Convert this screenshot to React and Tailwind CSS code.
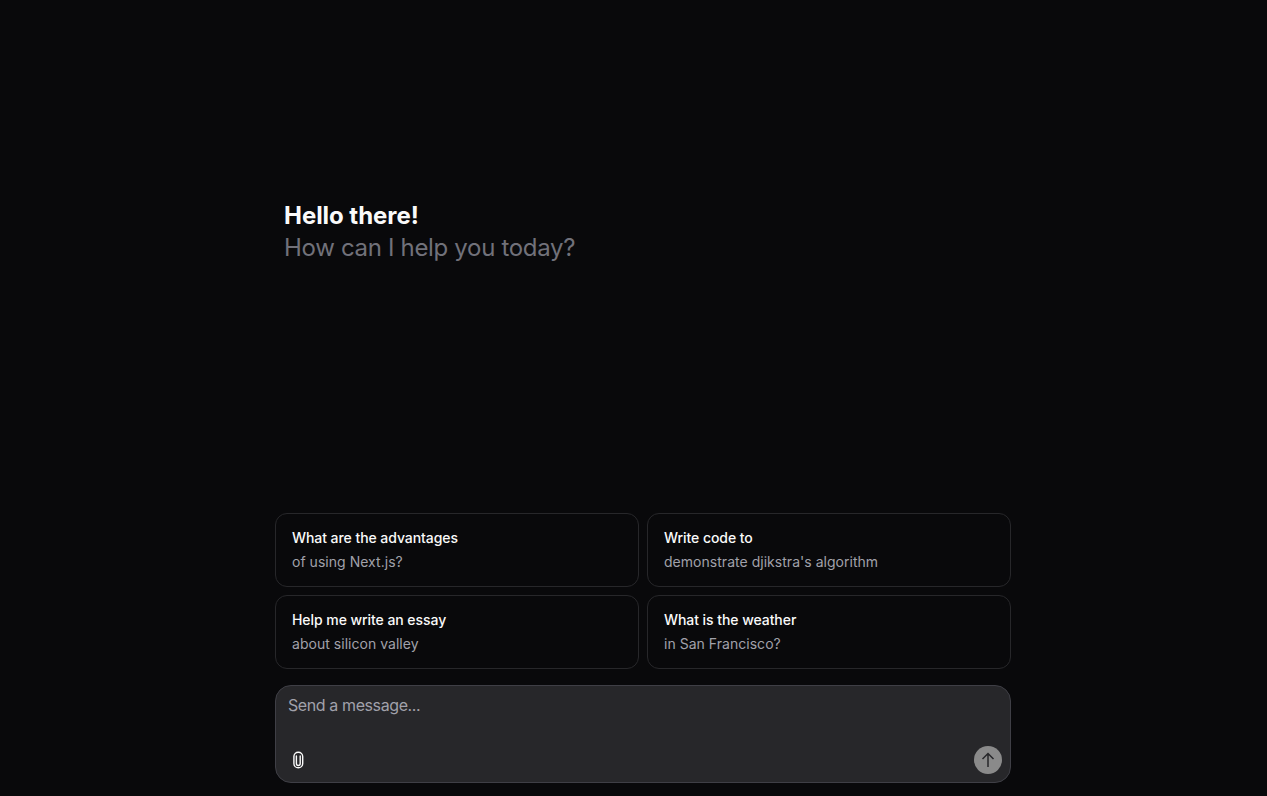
const font = { fontFamily: '"Inter", "Liberation Sans", sans-serif' };

function Card({ title, sub }) {
  return (
    <button className="flex h-[74px] flex-col items-start justify-start gap-1 rounded-xl border border-[#27272a] bg-transparent px-4 pt-[14px] text-left text-sm">
      <span className="h-5 font-medium leading-5 tracking-[-0.06px] text-[#fafafa]">{title}</span>
      <span className="h-5 leading-5 tracking-[0.03px] text-[#a1a1aa]">{sub}</span>
    </button>
  );
}

export default function App() {
  return (
    <div style={font} className="flex h-screen w-full flex-col bg-[#09090b] pl-[19px]">
      <div className="mx-auto flex h-full w-[736px] flex-col">
        <div className="flex flex-1 flex-col pl-[9px] pt-[200px]">
          <div className="text-2xl font-bold leading-8 tracking-[-0.05px] text-[#fafafa]">Hello there!</div>
          <div className="text-2xl leading-8 tracking-[-0.32px] text-[#71717a]">How can I help you today?</div>
        </div>
        <div className="grid grid-cols-2 gap-2">
          <Card title="What are the advantages" sub="of using Next.js?" />
          <Card title="Write code to" sub="demonstrate djikstra's algorithm" />
          <Card title="Help me write an essay" sub="about silicon valley" />
          <Card title="What is the weather" sub="in San Francisco?" />
        </div>
        <div className="mb-[13px] mt-4 flex h-[98px] flex-col justify-between rounded-2xl border border-[#3f3f46] bg-[#27272a] pb-[8px] pl-3 pr-2 pt-[7px]">
          <div className="text-base leading-6 tracking-[-0.4px] text-[#a1a1aa]">Send a message...</div>
          <div className="flex items-center justify-between">
            <svg width="16" height="20" viewBox="0 0 16 20" fill="none" stroke="#fafafa" strokeWidth="1.4" strokeLinecap="round" className="ml-[2px]">
              <path d="M12.7 7.5V6.6a4.4 4.4 0 0 0-8.8 0v6.8a4.4 4.4 0 0 0 8.8 0V7.5" />
              <path d="M10.2 6v7.6a1.9 1.9 0 0 1-3.8 0V6" />
            </svg>
            <div className="flex h-[28px] w-[28px] items-center justify-center rounded-full bg-[#8a8a8a]">
              <svg width="16" height="16" viewBox="0 0 16 16" fill="none" stroke="#27272a" strokeWidth="1.5">
                <path d="M8 15V1.5M2.5 7 8 1.5 13.5 7" />
              </svg>
            </div>
          </div>
        </div>
      </div>
    </div>
  );
}
